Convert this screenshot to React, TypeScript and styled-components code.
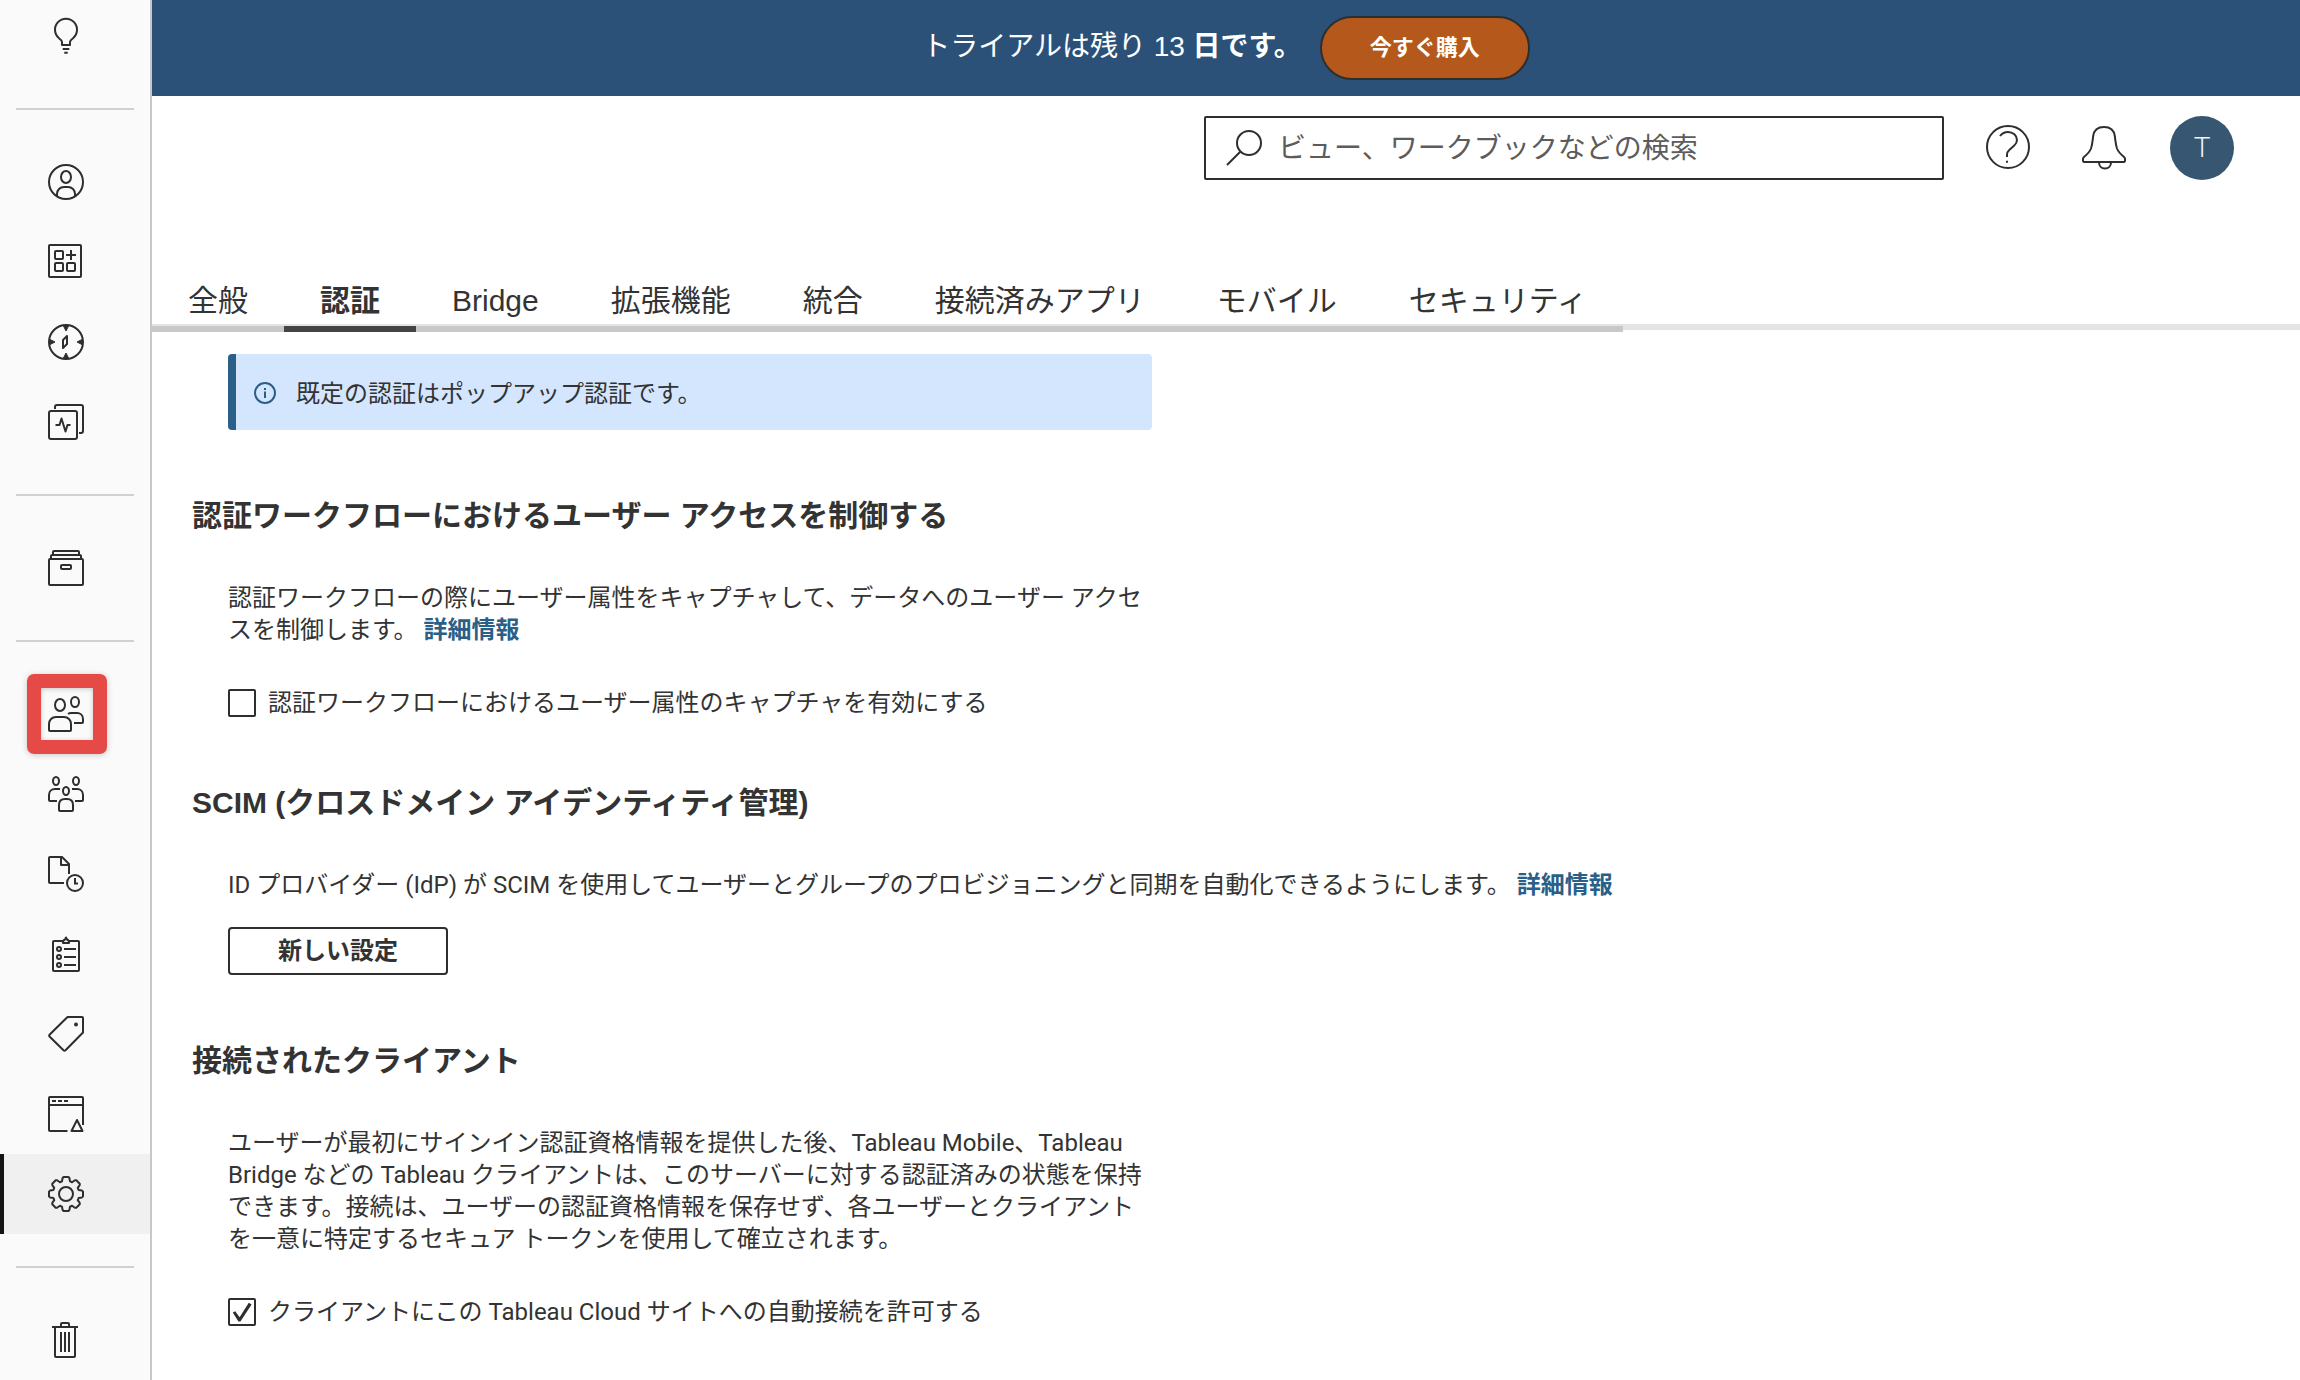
import React, { useState } from "react";
import styled, { createGlobalStyle, css } from "styled-components";

const ink = "#2e2e2e";
const displayFont = '"Liberation Sans", "Noto Sans CJK JP", sans-serif';

const GlobalStyle = createGlobalStyle`
  *, *::before, *::after { box-sizing: border-box; }
  body {
    margin: 0;
    background: #fff;
    color: #333;
    font-family: Roboto, "Noto Sans CJK JP", sans-serif;
    font-size: 24px;
    line-height: 32px;
  }
  button, input { font: inherit; color: inherit; }
`;

const Page = styled.div`
  display: grid;
  grid-template-columns: 152px minmax(0, 1fr);
  min-height: 100vh;
`;

/* The rail is a few pixels scrolled, so its first entry starts above the window. */
const Sidebar = styled.nav`
  overflow: hidden;
  background: #fafafa;
  border-right: 2px solid #c8c8c8;
`;

const SideList = styled.ul`
  margin: -4px 0 0;
  padding: 0;
  list-style: none;
`;

const SideDivider = styled.li`
  height: 2px;
  margin: 32px 16px;
  background: #d0d0d0;
`;

const SideItem = styled.li<{ $highlighted?: boolean }>`
  position: relative;
  ${(p) =>
    p.$highlighted &&
    css`
      &::after {
        content: "";
        position: absolute;
        top: 0;
        left: 27px;
        width: 80px;
        height: 80px;
        border: 14px solid #e64a47;
        border-radius: 7px;
        box-shadow: 0 1px 6px rgba(0, 0, 0, 0.2), inset 0 1px 5px rgba(0, 0, 0, 0.2);
        pointer-events: none;
      }
    `}
`;

const SideLink = styled.a<{ $active?: boolean }>`
  display: flex;
  align-items: center;
  height: 80px;
  padding-left: 44px;
  color: ${ink};
  border-left: 4px solid ${(p) => (p.$active ? "#161412" : "transparent")};
  background: ${(p) => (p.$active ? "#f0f0f0" : "transparent")};
`;

const Glyph = styled.svg`
  display: block;
  flex: none;
  overflow: visible;
  fill: none;
  stroke: ${ink};
  stroke-width: 2;
  stroke-linejoin: round;
`;

const Column = styled.div`
  min-width: 0;
`;

const Banner = styled.div`
  display: flex;
  align-items: center;
  justify-content: center;
  gap: 18px;
  height: 96px;
  background: #2c5179;
  color: #fff;
`;

const BannerText = styled.p`
  margin: 0;
  padding-bottom: 2px;
  font-family: ${displayFont};
  font-size: 28px;
  line-height: 40px;
`;

const BuyButton = styled.button`
  height: 64px;
  padding: 0 48px;
  border: 2px solid #2e2e2e;
  border-radius: 32px;
  background: #b4591b;
  color: #fff;
  font-size: 22px;
  font-weight: 700;
`;

const Header = styled.header`
  display: flex;
  align-items: center;
  justify-content: flex-end;
  padding: 20px 66px 0 24px;
`;

const SearchBox = styled.label`
  display: flex;
  align-items: center;
  gap: 16px;
  width: 740px;
  height: 64px;
  margin-right: 16px;
  padding: 0 20px;
  border: 2px solid ${ink};
  border-radius: 2px;
`;

const SearchInput = styled.input`
  flex: 1;
  min-width: 0;
  height: 60px;
  padding: 0;
  border: 0;
  outline: 0;
  background: transparent;
  font-size: 28px;
  &::placeholder {
    color: #5c5c5c;
    opacity: 1;
  }
`;

const IconButton = styled.button`
  display: flex;
  justify-content: center;
  align-items: center;
  width: 96px;
  height: 64px;
  padding: 0 0 2px;
  border: 0;
  background: none;
`;

const Avatar = styled.button`
  width: 64px;
  height: 64px;
  margin-left: 18px;
  padding: 0;
  border: 0;
  border-radius: 50%;
  background: #375672;
  color: #f2f2f2;
  font-size: 28px;
  font-weight: 300;
`;

const TabBar = styled.div`
  margin-top: 90px;
  border-bottom: 6px solid #e4e4e4;
`;

const TabList = styled.div`
  display: flex;
  width: max-content;
  margin-bottom: -8px;
`;

const Tab = styled.button<{ $active?: boolean }>`
  height: 62px;
  padding: 6px 36px 0;
  border: 0;
  border-bottom: 6px solid ${(p) => (p.$active ? "#444" : "#c8c8c8")};
  background: none;
  font-family: ${displayFont};
  font-size: 30px;
  line-height: 40px;
  font-weight: ${(p) => (p.$active ? 700 : 400)};
  white-space: nowrap;
`;

const Content = styled.main`
  padding: 24px 40px 0;
`;

const Notice = styled.div`
  display: flex;
  align-items: center;
  gap: 20px;
  max-width: 924px;
  height: 76px;
  margin-left: 36px;
  padding: 2px 0 0 18px;
  border-left: 8px solid #2a6087;
  border-radius: 4px;
  background: #d4e6fd;
`;

const NoticeText = styled.span`
  padding-top: 2px;
`;

const NoticeGlyph = styled(Glyph)`
  stroke: #2a6087;
`;

const Section = styled.section`
  margin-top: 66px;
`;

const Title = styled.h2`
  margin: 0 0 46px;
  font-family: ${displayFont};
  font-size: 30px;
  line-height: 40px;
  font-weight: 700;
`;

const Body = styled.div`
  margin-left: 36px;
`;

const Text = styled.p<{ $wide?: boolean }>`
  margin: 0;
  max-width: ${(p) => (p.$wide ? "none" : "924px")};
`;

const More = styled.a`
  color: #2a6087;
  font-weight: 700;
  text-decoration: none;
`;

const CheckRow = styled.label`
  display: flex;
  align-items: center;
  gap: 12px;
  margin-top: 43px;
  line-height: 28px;
`;

const Check = styled.input`
  appearance: none;
  display: grid;
  place-items: center;
  width: 28px;
  height: 28px;
  margin: 0;
  border: 2px solid ${ink};
  border-radius: 2px;
  background: #fff;
  &:checked::before {
    content: "";
    width: 20px;
    height: 20px;
    background: ${ink};
    clip-path: polygon(4% 52%, 16% 46%, 38% 76%, 84% 4%, 98% 12%, 42% 98%, 32% 98%);
  }
`;

const PlainButton = styled.button`
  display: block;
  width: 220px;
  height: 48px;
  margin-top: 26px;
  padding: 0;
  border: 2px solid ${ink};
  border-radius: 4px;
  background: #fff;
  font-weight: 700;
`;

const gearPath = (() => {
  const tooth = [
    [-4, -12.6],
    [-3.4, -16],
    [-2.4, -17],
    [2.4, -17],
    [3.4, -16],
    [4, -12.6],
    [5.1, -12.2],
  ];
  const points: string[] = [];
  for (let i = 0; i < 8; i++) {
    const a = (i * Math.PI) / 4;
    for (const [x, y] of tooth) {
      const px = 18 + x * Math.cos(a) - y * Math.sin(a);
      const py = 18 + x * Math.sin(a) + y * Math.cos(a);
      points.push(`${px.toFixed(2)} ${py.toFixed(2)}`);
    }
  }
  return `M${points.join("L")}z`;
})();

const icons: Record<string, React.ReactNode> = {
  bulb: (
    <>
      <path d="M14 27v-3c0-1.500-1-2.300-3-3.800A11 11 0 1 1 25 20.200c-2 1.500-3 2.300-3 3.800v3z" />
      <path d="M14.700 31h6.600M16.300 34.700h3.400" />
    </>
  ),
  person: (
    <>
      <circle cx="18" cy="18" r="17" />
      <ellipse cx="18" cy="13" rx="5" ry="6" />
      <path d="M9 32v-2c0-4 3-7 7-7h4c4 0 7 3 7 7v2" />
    </>
  ),
  collections: (
    <>
      <rect x="1" y="1" width="32" height="32" rx="1" />
      <rect x="7" y="7" width="8" height="8" rx="1" />
      <rect x="7" y="19" width="8" height="8" rx="1" />
      <rect x="19" y="19" width="8" height="8" rx="1" />
      <path d="M23 6v10M18 11h10" />
    </>
  ),
  explore: (
    <>
      <circle cx="18" cy="18" r="17" />
      <path d="M15.500 2h5L18 7zM15.500 34h5L18 29zM2 15.500v5L7 18zM34 15.500v5L29 18z" fill={ink} strokeWidth="1" />
      <path d="M15 24v-8l4-4v8z" />
    </>
  ),
  pulse: (
    <>
      <rect x="1" y="7" width="28" height="28" rx="2" />
      <path d="M7 5V3a2 2 0 0 1 2-2h24a2 2 0 0 1 2 2v24a2 2 0 0 1-2 2h-2" />
      <path d="M7.500 21h4l2-6.500L17.500 27.500l2-6.500h3" />
    </>
  ),
  archive: (
    <>
      <rect x="1" y="9" width="34" height="26" rx="1" />
      <path d="M3 9V6a1 1 0 0 1 1-1h28a1 1 0 0 1 1 1v3M5 5V2a1 1 0 0 1 1-1h24a1 1 0 0 1 1 1v3" />
      <rect x="13" y="15" width="10" height="4" rx="1" />
    </>
  ),
  users: (
    <>
      <ellipse cx="12" cy="9" rx="5" ry="6" />
      <path d="M1 34v-6c0-4 3-7 7-7h8c4 0 7 3 7 7v6a1 1 0 0 1-1 1H2a1 1 0 0 1-1-1z" />
      <ellipse cx="27" cy="6" rx="4" ry="5" />
      <path d="M20 18c1-.7 2-1 3-1h6c3.500 0 6 2.500 6 6v3a1 1 0 0 1-1 1h-8" />
    </>
  ),
  groups: (
    <>
      <ellipse cx="8" cy="5" rx="3" ry="4" />
      <ellipse cx="28" cy="5" rx="3" ry="4" />
      <ellipse cx="18" cy="15" rx="3" ry="4" />
      <path d="M12 13H7c-3.500 0-6 2.500-6 6v5a1 1 0 0 0 1 1h7M24 13h5c3.500 0 6 2.500 6 6v5a1 1 0 0 1-1 1h-7" />
      <path d="M11 34v-5c0-4 2.500-6 6-6h2c3.500 0 6 2 6 6v5a1 1 0 0 1-1 1H12a1 1 0 0 1-1-1z" />
    </>
  ),
  schedules: (
    <>
      <path d="M16 27H2a1 1 0 0 1-1-1V2a1 1 0 0 1 1-1h12l7 7v10" />
      <path d="M13 1v8h8" />
      <circle cx="27" cy="27" r="8" />
      <path d="M27 22v5.500h3" strokeLinejoin="miter" />
    </>
  ),
  jobs: (
    <>
      <rect x="5" y="5" width="26" height="30" rx="1" />
      <path d="M15 7c-.5-2 .8-3 2-3.500L18 1.500l1 2c1.200.5 2.500 1.500 2 3.500z" fill="#fafafa" />
      <circle cx="11" cy="13" r="2" />
      <circle cx="11" cy="21" r="2" />
      <circle cx="11" cy="29" r="2" />
      <path d="M16 13h12M16 21h12M16 29h12" />
    </>
  ),
  tasks: (
    <>
      <path d="M20 1h14a1 1 0 0 1 1 1v14.500L17.500 34.300a1.500 1.500 0 0 1-2 0L1.500 20.500a1.200 1.200 0 0 1 0-1.700L19 1.500z" />
      <circle cx="28" cy="8.500" r="2" fill={ink} stroke="none" />
    </>
  ),
  status: (
    <>
      <path d="M19.500 35H2a1 1 0 0 1-1-1V2a1 1 0 0 1 1-1h32a1 1 0 0 1 1 1v27M1 9h34" />
      <path d="M4 5h4M10 5h4M16 5h4" />
      <path d="M29 24l5.500 11h-11z" />
    </>
  ),
  settings: (
    <>
      <path d={gearPath} />
      <circle cx="18" cy="18" r="7" />
    </>
  ),
  trash: (
    <>
      <path d="M4 5h26M13 5V2a1 1 0 0 1 1-1h6a1 1 0 0 1 1 1v3M7 5v29a1 1 0 0 0 1 1h18a1 1 0 0 0 1-1V5" />
      <path d="M13 10v20M17 10v20M21 10v20" />
    </>
  ),
};

const sideGroups: { id: string; label: string }[][] = [
  [{ id: "bulb", label: "ヒント" }],
  [
    { id: "person", label: "個人用スペース" },
    { id: "collections", label: "コレクション" },
    { id: "explore", label: "検索" },
    { id: "pulse", label: "Pulse" },
  ],
  [{ id: "archive", label: "外部アセット" }],
  [
    { id: "users", label: "ユーザー" },
    { id: "groups", label: "グループ" },
    { id: "schedules", label: "スケジュール" },
    { id: "jobs", label: "ジョブ" },
    { id: "tasks", label: "タスク" },
    { id: "status", label: "サイトステータス" },
    { id: "settings", label: "設定" },
  ],
  [{ id: "trash", label: "ごみ箱" }],
];

const tabs = ["全般", "認証", "Bridge", "拡張機能", "統合", "接続済みアプリ", "モバイル", "セキュリティ"];

function SideNav() {
  return (
    <Sidebar>
      <SideList>
        {sideGroups.map((group, index) => (
          <React.Fragment key={index}>
            {index > 0 && <SideDivider role="separator" />}
            {group.map((item) => (
              <SideItem key={item.id} $highlighted={item.id === "users"}>
                <SideLink href={`#${item.id}`} aria-label={item.label} $active={item.id === "settings"}>
                  <Glyph width="36" height="36" viewBox="0 0 36 36" aria-hidden="true">
                    {icons[item.id]}
                  </Glyph>
                </SideLink>
              </SideItem>
            ))}
          </React.Fragment>
        ))}
      </SideList>
    </Sidebar>
  );
}

export default function App() {
  const [tab, setTab] = useState("認証");
  const [capture, setCapture] = useState(false);
  const [autoConnect, setAutoConnect] = useState(true);

  return (
    <Page>
      <GlobalStyle />
      <SideNav />
      <Column>
        <Banner>
          <BannerText>
            トライアルは残り 13 <b>日です。</b>
          </BannerText>
          <BuyButton type="button">今すぐ購入</BuyButton>
        </Banner>
        <Header>
          <SearchBox>
            <Glyph width="36" height="36" viewBox="0 0 36 36" aria-hidden="true">
              <circle cx="23" cy="13" r="12" />
              <path d="M14.500 21.500L1 35" />
            </Glyph>
            <SearchInput type="search" placeholder="ビュー、ワークブックなどの検索" aria-label="検索" />
          </SearchBox>
          <IconButton type="button" aria-label="ヘルプ">
            <Glyph width="44" height="44" viewBox="0 0 44 44">
              <circle cx="22" cy="22" r="21" />
              <path d="M14 11c2-2.600 5-4 8-4 5 0 9 3.500 9 8 0 2.500-1 4-3 5.700l-4.500 4c-1.700 1.500-2.500 3-2.500 5v2.300M20 36.700h2" />
            </Glyph>
          </IconButton>
          <IconButton type="button" aria-label="通知">
            <Glyph width="44" height="44" viewBox="0 0 44 44">
              <path d="M22 2c6 0 10 3.500 10.800 9 .8 6 .9 9 2.200 12.500 1.200 3 4 6 7 8.500.6.500 1 1 1 1.800v1.700c0 1-.5 1.500-1.500 1.500h-39C1.500 37 1 36.500 1 35.500v-1.700c0-.8.400-1.300 1-1.800 3-2.500 5.800-5.500 7-8.500 1.300-3.500 1.400-6.500 2.200-12.500C12 5.500 16 2 22 2z" />
              <path d="M17 37.500c0 3.500 2.500 6 6 6s6-2.500 6-6" />
            </Glyph>
          </IconButton>
          <Avatar type="button">T</Avatar>
        </Header>
        <TabBar>
          <TabList role="tablist">
            {tabs.map((name) => (
              <Tab
                key={name}
                type="button"
                role="tab"
                aria-selected={name === tab}
                $active={name === tab}
                onClick={() => setTab(name)}
              >
                {name}
              </Tab>
            ))}
          </TabList>
        </TabBar>
        <Content>
          <Notice>
            <NoticeGlyph width="22" height="22" viewBox="0 0 22 22" aria-hidden="true">
              <circle cx="11" cy="11" r="10" />
              <path d="M11 9.500v6.500M11 6v2" />
            </NoticeGlyph>
            <NoticeText>既定の認証はポップアップ認証です。</NoticeText>
          </Notice>
          <Section>
            <Title>認証ワークフローにおけるユーザー アクセスを制御する</Title>
            <Body>
              <Text>
                認証ワークフローの際にユーザー属性をキャプチャして、データへのユーザー アクセスを制御します。{" "}
                <More href="#attributes">詳細情報</More>
              </Text>
              <CheckRow>
                <Check type="checkbox" checked={capture} onChange={(e) => setCapture(e.target.checked)} />
                認証ワークフローにおけるユーザー属性のキャプチャを有効にする
              </CheckRow>
            </Body>
          </Section>
          <Section>
            <Title>SCIM (クロスドメイン アイデンティティ管理)</Title>
            <Body>
              <Text $wide>
                ID プロバイダー (IdP) が SCIM を使用してユーザーとグループのプロビジョニングと同期を自動化できるようにします。{" "}
                <More href="#scim">詳細情報</More>
              </Text>
              <PlainButton type="button">新しい設定</PlainButton>
            </Body>
          </Section>
          <Section>
            <Title>接続されたクライアント</Title>
            <Body>
              <Text>
                ユーザーが最初にサインイン認証資格情報を提供した後、Tableau Mobile、Tableau Bridge などの Tableau
                クライアントは、このサーバーに対する認証済みの状態を保持できます。接続は、ユーザーの認証資格情報を保存せず、各ユーザーとクライアントを一意に特定するセキュア
                トークンを使用して確立されます。
              </Text>
              <CheckRow>
                <Check type="checkbox" checked={autoConnect} onChange={(e) => setAutoConnect(e.target.checked)} />
                クライアントにこの Tableau Cloud サイトへの自動接続を許可する
              </CheckRow>
            </Body>
          </Section>
        </Content>
      </Column>
    </Page>
  );
}
